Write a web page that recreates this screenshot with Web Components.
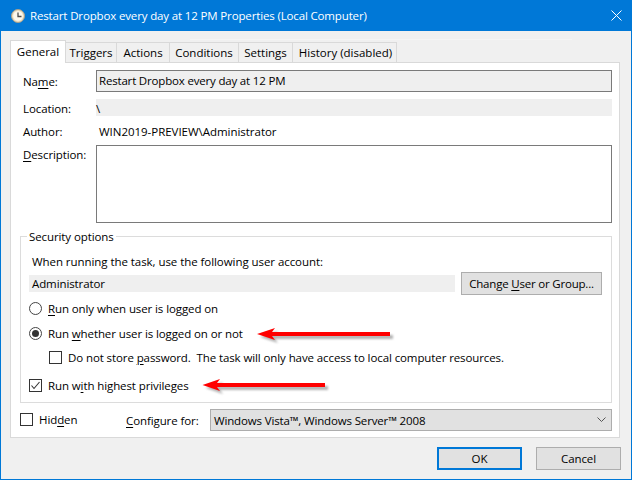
<!DOCTYPE html>
<html>
<head>
<meta charset="utf-8">
<style>
  html, body { margin: 0; padding: 0; background: #f0f0f0; }
  body { font: 11.5px "Open Sans", "Liberation Sans", sans-serif; color: #000; }
</style>
</head>
<body>
<props-dialog title-text="Restart Dropbox every day at 12 PM Properties (Local Computer)">
  <tab-strip></tab-strip>
  <general-panel></general-panel>
  <dialog-footer></dialog-footer>
</props-dialog>

<script>
// shared look of the text, tweaked to get the Segoe UI widths
const textStyle = `font: 11.5px "Open Sans", "Liberation Sans", sans-serif; letter-spacing: -0.1px; color: #000; white-space: pre;`;

class PropsDialog extends HTMLElement {
    constructor() {
        super();
        this.shadowObj = this.attachShadow({ mode: 'open' });
        this.shadowObj.innerHTML = `
        <style>
            :host { display: block; width: 632px; height: 480px; box-sizing: border-box; border: 1px solid #0078d7; border-top: 0; background: #f0f0f0; position: relative; }
            .bar { height: 31px; background: #0078d7; color: #fff; display: flex; align-items: center; padding: 0 0 0 10px; }
            .bar svg.clock { margin: 1px 5px 0 0; }
            .title { ${textStyle} color: #fff; flex: 1; letter-spacing: -0.145px; }
            .close { display: flex; margin-right: 9px; }
            .body { padding: 0 10px 0 9px; }
            .body::before { content: ""; display: block; height: 1px; width: 382px; margin: 8px 0 0 180px; background: #f5f5f5; }
        </style>
        <div class="bar">
            <svg class="clock" width="14" height="14" viewBox="0 0 14 14">
                <circle cx="7" cy="7" r="6.5" fill="#ecdfc0" stroke="#a89f8c"/>
                <circle cx="7" cy="7" r="4.8" fill="#fbf8ee"/>
                <path d="M7 3.5V7.5H10.5" fill="none" stroke="#4c4c4c" stroke-width="1.3"/>
            </svg>
            <span class="title">${this.getAttribute('title-text')}</span>
            <span class="close">
                <svg width="11" height="11" viewBox="0 0 11 11"><path d="M.5 .5L10.5 10.5M10.5 .5L.5 10.5" stroke="#fff" stroke-width="1" fill="none"/></svg>
            </span>
        </div>
        <div class="body"><slot></slot></div>`;
    }
}

class TabStrip extends HTMLElement {
    constructor() {
        super();
        this.shadowObj = this.attachShadow({ mode: 'open' });
        const tabs = ['Triggers', 'Actions', 'Conditions', 'Settings', 'History (disabled)'];
        this.shadowObj.innerHTML = `
        <style>
            :host { display: flex; height: 22px; align-items: flex-end; position: relative; z-index: 1; }
            .tab { ${textStyle} letter-spacing: 0; height: 20px; line-height: 20px; box-sizing: border-box; border: 1px solid #d9d9d9; border-left: 0; border-bottom: 0; background: #f0f0f0; text-align: center; }
            .tab:last-child { padding-left: 2px; }
            .on { height: 23px; margin-bottom: -1px; width: 56px; border: 1px solid #d9d9d9; border-bottom: 0; background: #fff; line-height: 21px; }
        </style>
        <div class="tab on">General</div>
        ${tabs.map((t, i) => `<div class="tab" style="width:${[51, 53, 69, 54, 104][i]}px">${t}</div>`).join('')}`;
    }
}

class GeneralPanel extends HTMLElement {
    constructor() {
        super();
        this.shadowObj = this.attachShadow({ mode: 'open' });
        this.shadowObj.innerHTML = `
        <style>
            :host { display: block; width: 610px; height: 376px; box-sizing: border-box; border: 1px solid #d9d9d9; background: #fff; padding: 7px 7px 0 9px; position: relative; }
            .row { ${textStyle} display: flex; }
            .lbl { width: 76px; padding-left: 3px; box-sizing: border-box; flex: none; }
            u { text-underline-offset: 2px; text-decoration-thickness: 1px; }
            .input { flex: 1; box-sizing: border-box; border: 1px solid #7a7a7a; padding-left: 2px; }
            .ro { flex: 1; background: #efefef; padding-left: 0; }
            .name { height: 22px; align-items: center; }
            .name .input { height: 22px; background: #efefef; line-height: 20px; letter-spacing: -0.18px; }
            .loc { height: 17px; margin-top: 7px; line-height: 19px; }
            .auth { height: 17px; margin-top: 7px; line-height: 17px; }
            .auth span + span { padding-left: 3px; letter-spacing: -0.03px; }
            .desc { height: 78px; margin-top: 5px; }
            .desc .lbl { padding-top: 2px; }
            .group { display: block; margin-top: 13px; height: 167px; box-sizing: border-box; border: 1px solid #dcdcdc; padding: 16px 0 0 8px; position: relative; }
            .legend { ${textStyle} position: absolute; left: 6px; top: -9px; background: #fff; padding: 0 2px 0 2px; line-height: 17px; }
            .acct { ${textStyle} letter-spacing: -0.06px; padding-left: 3px; line-height: 17px; }
            .admin-row { display: flex; margin-top: 2px; align-items: center; }
            .admin { ${textStyle} width: 426px; height: 17px; line-height: 17px; background: #efefef; padding-left: 3px; box-sizing: border-box; }
            .opts { margin-top: 7px; }
            .bottom { display: flex; align-items: center; height: 22px; margin-top: 6px; }
            .bottom win-option { width: 106px; flex: none; margin-top: -1px; }
            .cfg { ${textStyle} width: 84px; flex: none; }
            .arrows { position: absolute; left: 0; top: 0; pointer-events: none; }
        </style>
        <div class="row name"><span class="lbl">Na<u>m</u>e:</span><span class="input">Restart Dropbox every day at 12 PM</span></div>
        <div class="row loc"><span class="lbl">Location:</span><span class="ro">\\</span></div>
        <div class="row auth"><span class="lbl">Author:</span><span>WIN2019-PREVIEW\\Administrator</span></div>
        <div class="row desc"><span class="lbl"><u>D</u>escription:</span><span class="input"></span></div>
        <div class="group">
            <span class="legend">Security options</span>
            <div class="acct">When running the task, use the following user account:</div>
            <div class="admin-row">
                <span class="admin">Administrator</span>
                <win-button style="margin-left:6px;width:141px;height:23px;letter-spacing:-0.2px">Change <u>U</u>ser or Group...</win-button>
            </div>
            <div class="opts">
                <win-option type="radio"><u>R</u>un only when user is logged on</win-option>
                <win-option type="radio" checked style="margin-top:12px">Run <u>w</u>hether user is logged on or not</win-option>
                <win-option type="check" style="margin-top:11px;margin-left:20px">Do not store <u>p</u>assword.  The task will only have access to local computer resources.</win-option>
                <win-option type="check" checked style="margin-top:15px">Run w<u>i</u>th highest privileges</win-option>
            </div>
        </div>
        <div class="bottom">
            <win-option type="check">Hid<u>d</u>en</win-option>
            <span class="cfg"><u>C</u>onfigure for:</span>
            <win-combo>Windows Vista™, Windows Server™ 2008</win-combo>
        </div>
        <svg class="arrows" width="610" height="376" viewBox="0 0 610 376">
            <defs><filter id="s" x="-10%" y="-60%" width="120%" height="260%"><feGaussianBlur stdDeviation="1.2"/></filter></defs>
            <g transform="translate(-11 -63)">
                <g fill="#777" opacity=".55" filter="url(#s)" transform="translate(3 3)">
                    <path d="M257 334L275 328L272 332H390V336H272L275 340Z"/>
                    <path d="M202.5 385L220 379L217 383H325V387H217L220 391Z"/>
                </g>
                <g fill="#f00">
                    <path d="M257 334L275 328L272 332H390V336H272L275 340Z"/>
                    <path d="M202.5 385L220 379L217 383H325V387H217L220 391Z"/>
                </g>
            </g>
        </svg>`;
    }
}

class WinOption extends HTMLElement {
    constructor() {
        super();
        this.shadowObj = this.attachShadow({ mode: 'open' });
        const checked = this.hasAttribute('checked');
        const mark = this.getAttribute('type') === 'radio'
            ? `<circle cx="6.5" cy="6.5" r="6" fill="#fff" stroke="#444"/>${checked ? '<circle cx="6.5" cy="6.5" r="3.5" fill="#333"/>' : ''}`
            : `<rect x=".5" y=".5" width="12" height="12" fill="#fff" stroke="#333"/>${checked ? '<path d="M2.5 6.5L5 9.5L10.5 3" fill="none" stroke="#333" stroke-width="1.1"/>' : ''}`;
        this.shadowObj.innerHTML = `
        <style>
            :host { display: flex; align-items: center; height: 13px; ${textStyle} }
            svg { flex: none; margin-right: 6px; }
            ::slotted(u) { text-underline-offset: 2px; text-decoration-thickness: 1px; }
        </style>
        <svg width="13" height="13" viewBox="0 0 13 13">${mark}</svg><span><slot></slot></span>`;
    }
}

class WinButton extends HTMLElement {
    constructor() {
        super();
        this.shadowObj = this.attachShadow({ mode: 'open' });
        this.shadowObj.innerHTML = `
        <style>
            :host { display: flex; align-items: center; justify-content: center; box-sizing: border-box; background: #e1e1e1; border: 1px solid #adadad; ${textStyle} }
            :host([primary]) { border: 2px solid #0078d7; }
            ::slotted(u) { text-underline-offset: 2px; text-decoration-thickness: 1px; }
        </style>
        <slot></slot>`;
    }
}

class WinCombo extends HTMLElement {
    constructor() {
        super();
        this.shadowObj = this.attachShadow({ mode: 'open' });
        this.shadowObj.innerHTML = `
        <style>
            :host { display: flex; align-items: center; flex: 1; height: 22px; box-sizing: border-box; background: #e1e1e1; border: 1px solid #adadad; padding: 0 5px 0 3px; ${textStyle} letter-spacing: -0.15px; }
            span { flex: 1; }
        </style>
        <span><slot></slot></span>
        <svg width="9" height="6" viewBox="0 0 9 6"><path d="M.5 .5L4.5 4.5L8.5 .5" fill="none" stroke="#555"/></svg>`;
    }
}

class DialogFooter extends HTMLElement {
    constructor() {
        super();
        this.shadowObj = this.attachShadow({ mode: 'open' });
        this.shadowObj.innerHTML = `
        <style>
            :host { display: flex; justify-content: flex-end; gap: 14px; padding-top: 9px; }
            win-button { width: 85px; height: 23px; }
        </style>
        <win-button primary>OK</win-button>
        <win-button>Cancel</win-button>`;
    }
}

customElements.define('win-option', WinOption);
customElements.define('win-button', WinButton);
customElements.define('win-combo', WinCombo);
customElements.define('tab-strip', TabStrip);
customElements.define('general-panel', GeneralPanel);
customElements.define('dialog-footer', DialogFooter);
customElements.define('props-dialog', PropsDialog);
</script>
</body>
</html>
